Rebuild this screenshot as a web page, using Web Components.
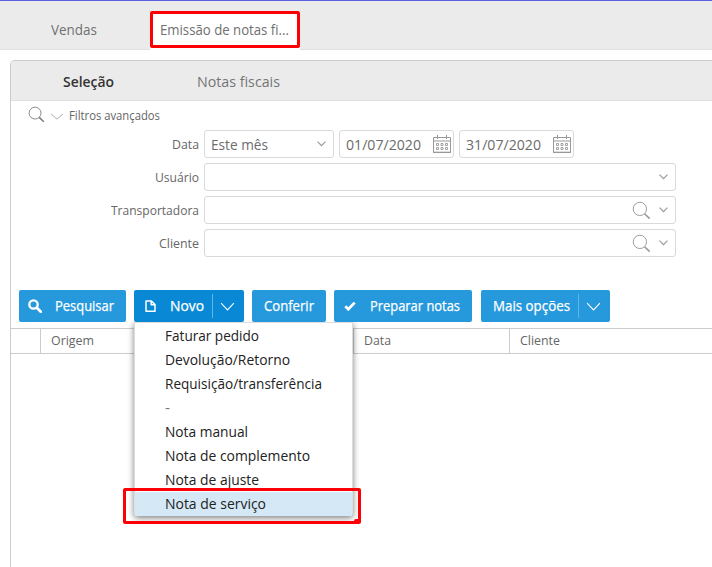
<!DOCTYPE html>
<html lang="pt-BR">
<head>
<meta charset="utf-8">
<title>Emissão de notas fiscais</title>
<style>
html,body{margin:0;height:100%;overflow:hidden;background:#fff}
body{font-family:"Open Sans","Noto Sans",sans-serif;color:#666}
</style>
</head>
<body>
<invoice-app></invoice-app>
<script>
const define=(name,html,setup)=>customElements.define(name,class extends HTMLElement{
  connectedCallback(){
    if(this.shadowRoot)return;
    this.attachShadow({mode:'open'}).innerHTML=html(this);
    if(setup)setup(this);
  }
});

/* Single-line label condensed to fill a given width. */
define('ui-text',el=>`<style>
:host{display:inline-block;flex:none;white-space:nowrap;line-height:20px;height:20px;width:${el.getAttribute('w')}px}
span{display:inline-block;transform-origin:0 50%}
</style><span>${el.getAttribute('label')}</span>`,el=>{
  const s=el.shadowRoot.querySelector('span');
  s.style.transform=`scaleX(${+el.getAttribute('w')/s.getBoundingClientRect().width})`;
});

const icons={
  lens:['0 0 20 20','<circle cx="8.3" cy="8.3" r="7" /><path d="M13.2 13.4l5.4 5.2" stroke-width="1.7"/>'],
  down:['0 0 14 8','<path d="M1 1l6 6 6-6"/>'],
  small:['0 0 9 6','<path d="M.5 .7l4 4 4-4" stroke-width="1.15"/>'],
  calendar:['0 0 18 18','<path d="M.5 2.5h17v15H.5zM.5 6h17M4.5 0v4M13.5 0v4M0 17.2h18"/><path d="M3.5 8.5h2v2h-2zM8 8.5h2v2H8zM12.5 8.5h2v2h-2zM3.5 12.5h2v2h-2zM8 12.5h2v2H8zM12.5 12.5h2v2h-2z" stroke-width=".9"/>'],
  search:['0 0 14 14','<circle cx="5.5" cy="5.5" r="4.2" stroke-width="2.3"/><path d="M8.8 8.8l4 4" stroke-width="2.7" stroke-linecap="round"/>'],
  page:['0 0 11 12','<path d="M1 1h5.4L10 4.6V11.2H1zM6.2 1v3.8H10" stroke-width="1.5" stroke-linejoin="round"/>'],
  check:['0 0 12 10','<path d="M1.3 5.2l3 3L10.7 1.6" stroke-width="2.8"/>']
};
define('ui-icon',el=>{
  const [box,body]=icons[el.getAttribute('name')];
  return `<style>:host{display:block;flex:none;width:${el.getAttribute('w')}px;height:${el.getAttribute('h')}px}
svg{display:block;width:100%;height:100%;fill:none;stroke:currentColor}</style>
<svg viewBox="${box}" preserveAspectRatio="none">${body}</svg>`;
});

define('top-tabs',()=>`<style>
:host{display:flex;box-sizing:border-box;height:50px;background:#ebebeb;border-bottom:1px solid #e0e0e0;font-size:14.5px;
 border-top:1px solid #5b60de;padding-top:10px;color:#707070}
.tab{box-sizing:border-box;height:37px}
.first{width:150px;padding:9px 0 0 51px}
.active{width:150px;height:39px;background:#fff;position:relative;z-index:1}
.mark{box-sizing:border-box;height:37px;border:3px solid #fd0005;border-radius:2px;padding:6px 0 0 7px}
</style>
<div class="tab first"><ui-text label="Vendas" w="46"></ui-text></div>
<div class="active"><div class="mark"><ui-text label="Emissão de notas fi..." w="129"></ui-text></div></div>`);

define('panel-tabs',()=>`<style>
:host{display:flex;align-items:center;box-sizing:border-box;height:40px;padding:1px 0 0 52px;background:#ebebeb;border-bottom:1px solid #e0e0e0;border-top-left-radius:4px;font-size:15px;gap:83px;color:#747474}
.on{color:#333;font-weight:600;font-size:15px}
</style>
<ui-text class="on" label="Seleção" w="51"></ui-text><ui-text label="Notas fiscais" w="83"></ui-text>`);

define('filter-toggle',()=>`<style>
:host{display:flex;height:29px;padding:5px 0 0 17px;box-sizing:border-box;font-size:12.5px}
.l{color:#777}.d{color:#aaa;margin:7px 5px 0 5px}
</style>
<ui-icon class="l" name="lens" w="17" h="17"></ui-icon><ui-icon class="d" name="down" w="14" h="7"></ui-icon><ui-text label="Filtros avançados" w="91"></ui-text>`);

define('field-row',el=>`<style>
:host{display:flex;height:28px;align-items:center;gap:5px}
.l{width:188px;text-align:right;font-size:13px;flex:none;height:20px}
.l ui-text{text-align:left;vertical-align:top}
</style>
<div class="l"><ui-text label="${el.getAttribute('label')}" w="${el.getAttribute('w')}"></ui-text></div><slot></slot>`);

define('field-box',el=>{
  const k=el.getAttribute('kind'),v=el.getAttribute('value');
  return `<style>
:host{display:flex;box-sizing:border-box;width:${el.getAttribute('width')}px;height:28px;align-items:center;border:1px solid #d9d9d9;border-radius:3px;padding:0 ${k==='date'?2:7}px 0 6px;font-size:15px;color:#6c6c6c}
.s{flex:1}ui-icon{color:#999}.lens{margin-right:8px}.chev{color:#999}
</style>${v?`<ui-text label="${v}" w="${el.getAttribute('tw')}"></ui-text>`:''}<span class="s"></span>
${k==='lookup'?'<ui-icon class="lens" name="lens" w="19" h="19"></ui-icon>':''}
${k==='date'?'<ui-icon name="calendar" w="18" h="18"></ui-icon>':'<ui-icon class="chev" name="small" w="9" h="6"></ui-icon>'}`;
});

define('action-button',el=>{
  const a=n=>el.getAttribute(n);
  return `<style>
:host{display:flex;box-sizing:border-box;height:32px;width:${a('width')}px;align-items:center;padding-left:${a('pad')}px;background:#2698dc;border-radius:2px;color:#fff;font-size:14px;flex:none}
:host([open]){background:#0989d5}
ui-text{-webkit-text-stroke:.25px #fff}
ui-icon.i{margin-right:${a('gap')}px}
.sep{width:1px;height:24px;background:#63b5e5;margin:0 7px 0 8px}
</style>${a('icon')?`<ui-icon class="i" name="${a('icon')}" w="${a('iw')}" h="${a('ih')}"></ui-icon>`:''}
<ui-text label="${a('label')}" w="${a('tw')}"></ui-text>${el.hasAttribute('split')?'<span class="sep"></span><ui-icon name="down" w="15" h="9"></ui-icon>':''}`;
});

define('menu-item',el=>`<style>
:host{display:block;box-sizing:border-box;height:24px;padding:2px 0 0 30px;color:#222;font-size:14.5px}
:host([active]){background:#d5e8f6}
:host([dim]){color:#777}
ui-text{vertical-align:top}
</style><ui-text label="${el.getAttribute('label')}" w="${el.getAttribute('w')}"></ui-text>`);

define('drop-menu',()=>`<style>
:host{position:absolute;left:134px;top:322px;box-sizing:border-box;width:219px;height:194px;border:1px solid #ddd;border-bottom:0;border-radius:0 0 4px 4px;background:#fff;box-shadow:0 2px 6px rgba(0,0,0,.5);padding-top:1px;clip-path:inset(0 -12px -12px -12px)}
.callout{position:absolute;left:-12px;top:165px;width:232px;height:30px;border:3px solid #fd0005;border-radius:2px}
.corner{position:absolute;right:-1px;bottom:-1px;width:5px;height:3px;border-radius:2px 0 0 0;background:#fd0005}
</style>
<menu-item label="Faturar pedido" w="94"></menu-item>
<menu-item label="Devolução/Retorno" w="125"></menu-item>
<menu-item label="Requisição/transferência" w="157"></menu-item>
<menu-item dim label="-" w="5"></menu-item>
<menu-item label="Nota manual" w="83"></menu-item>
<menu-item label="Nota de complemento" w="145"></menu-item>
<menu-item label="Nota de ajuste" w="94"></menu-item>
<menu-item active label="Nota de serviço" w="101"></menu-item>
<div class="callout"><div class="corner"></div></div>`);

define('result-head',()=>`<style>
:host{display:grid;grid-template-columns:30px 313px 156px 1fr;box-sizing:border-box;height:26px;border:solid #ccc;border-width:1px 0;font-size:13px}
div{box-sizing:border-box;border-right:1px solid #ccc;padding:1px 0 0 10px}div:last-child{border:0}
ui-text{vertical-align:top}
</style><div></div><div><ui-text label="Origem" w="43"></ui-text></div><div><ui-text label="Data" w="27"></ui-text></div><div><ui-text label="Cliente" w="40"></ui-text></div>`);

define('invoice-app',()=>`<style>
:host{display:block;position:relative;width:712px;height:567px;overflow:hidden;background:#fff}
main{display:block;box-sizing:border-box;margin:10px 0 0 10px;height:507px;border:solid #ccc;border-width:1px 0 0 1px;border-top-left-radius:5px}
.fields{display:grid;gap:5px}
.actions{display:flex;gap:8px;padding:33px 0 6px 8px}
.more{margin-left:1px}
</style>
<top-tabs></top-tabs>
<main>
<panel-tabs></panel-tabs>
<filter-toggle></filter-toggle>
<div class="fields">
<field-row label="Data" w="27"><field-box kind="select" width="130" value="Este mês" tw="57"></field-box><field-box kind="date" width="115" value="01/07/2020" tw="75"></field-box><field-box kind="date" width="115" value="31/07/2020" tw="75"></field-box></field-row>
<field-row label="Usuário" w="44"><field-box kind="select" width="472"></field-box></field-row>
<field-row label="Transportadora" w="88"><field-box kind="lookup" width="472"></field-box></field-row>
<field-row label="Cliente" w="40"><field-box kind="lookup" width="472"></field-box></field-row>
</div>
<div class="actions">
<action-button width="107" pad="9" icon="search" iw="14" ih="14" gap="13" label="Pesquisar" tw="59"></action-button>
<action-button open split width="110" pad="11" icon="page" iw="11" ih="12" gap="14" label="Novo" tw="34"></action-button>
<action-button width="74" pad="12" label="Conferir" tw="50"></action-button>
<action-button width="138" pad="10" icon="check" iw="12" ih="10" gap="14" label="Preparar notas" tw="90"></action-button>
<action-button class="more" split width="129" pad="12" label="Mais opções" tw="77"></action-button>
</div>
<result-head></result-head>
</main>
<drop-menu></drop-menu>`);
</script>
</body>
</html>
